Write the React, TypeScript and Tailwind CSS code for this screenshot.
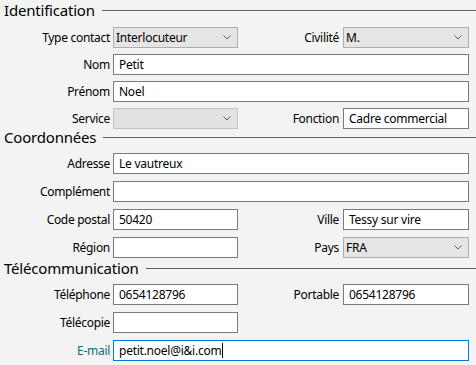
import React from 'react';

const font = { fontFamily: '"Noto Sans", "Open Sans", sans-serif' };

const Chevron = () => (
  <svg width="8" height="5" viewBox="0 0 8 5" className="shrink-0">
    <path d="M0.5 0.5 L4 4 L7.5 0.5" fill="none" stroke="#606060" strokeWidth="1" />
  </svg>
);

const TextBox: React.FC<{ value?: string; focused?: boolean; span?: boolean }> = ({ value = '', focused, span }) => (
  <div
    className={`h-[21px] bg-white border flex items-center pl-[5px] text-[12px] tracking-[-0.25px] text-black whitespace-nowrap overflow-hidden ${
      focused ? 'border-[#0078d7]' : 'border-[#7a7a7a]'
    } ${span ? 'col-span-3' : ''}`}
  >
    {value}
    {focused && <span className="inline-block w-px h-[15px] bg-black ml-px" />}
  </div>
);

const Combo: React.FC<{ value?: string; disabled?: boolean }> = ({ value = '', disabled }) => (
  <div
    className={`h-[21px] border flex items-center justify-between pl-[2px] pr-[6px] text-[12px] tracking-[-0.25px] text-black ${
      disabled ? 'bg-[#e2e2e2] border-[#c4c4c4]' : 'bg-[#e5e5e5] border-[#adadad]'
    }`}
  >
    <span>{value}</span>
    <Chevron />
  </div>
);

const Label: React.FC<{ text: string; accent?: boolean; right?: boolean }> = ({ text, accent, right }) => (
  <div
    className={`text-[12px] tracking-[-0.3px] text-right whitespace-nowrap ${right ? 'pr-[4px]' : 'pr-[3px]'} ${
      accent ? 'text-[#0b6e74]' : 'text-black'
    }`}
  >
    {text}
  </div>
);

const Header: React.FC<{ title: string }> = ({ title }) => (
  <div className="flex items-center h-[16px] pl-[4px]">
    <span className="text-[15px] leading-[16px] tracking-[-0.2px] text-black whitespace-nowrap">{title}</span>
    <div className="flex-1 h-px bg-[#5f5f5f] ml-[7px]" />
  </div>
);

const grid = 'grid grid-cols-[113px_125px_105px_126px] items-center';

export default function App() {
  return (
    <div className="w-[476px] h-[365px] bg-[#f3f3f3] overflow-hidden pt-[2px]" style={font}>
      {/* Identification */}
      <Header title="Identification" />
      <div className={`${grid} gap-y-[6px] mt-[9px]`}>
        <Label text="Type contact" />
        <Combo value="Interlocuteur" />
        <Label text="Civilité" right />
        <Combo value="M." />

        <Label text="Nom" />
        <TextBox value="Petit" span />

        <Label text="Prénom" />
        <TextBox value="Noel" span />

        <Label text="Service" />
        <Combo disabled />
        <Label text="Fonction" right />
        <TextBox value="Cadre commercial" />
      </div>

      {/* Coordonnées */}
      <Header title="Coordonnées" />
      <div className={`${grid} gap-y-[7px] mt-[8px]`}>
        <Label text="Adresse" />
        <TextBox value="Le vautreux" span />

        <Label text="Complément" />
        <TextBox span />

        <Label text="Code postal" />
        <TextBox value="50420" />
        <Label text="Ville" right />
        <TextBox value="Tessy sur vire" />

        <Label text="Région" />
        <TextBox />
        <Label text="Pays" right />
        <Combo value="FRA" />
      </div>

      {/* Télécommunication */}
      <div className="mt-[2px]">
        <Header title="Télécommunication" />
      </div>
      <div className={`${grid} gap-y-[7px] mt-[8px]`}>
        <Label text="Téléphone" />
        <TextBox value="0654128796" />
        <Label text="Portable" right />
        <TextBox value="0654128796" />

        <Label text="Télécopie" />
        <TextBox />
        <div />
        <div />

        <Label text="E-mail" accent />
        <TextBox value="petit.noel@i&i.com" focused span />
      </div>
    </div>
  );
}
